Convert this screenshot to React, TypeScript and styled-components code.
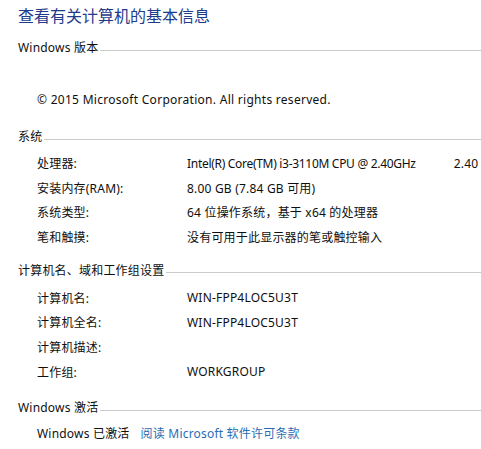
import React from 'react';
import styled, { createGlobalStyle } from 'styled-components';

const Global = createGlobalStyle`
  html, body { margin: 0; padding: 0; background: #fff; }
  body { font-family: "Noto Sans", "Noto Sans CJK SC", sans-serif; overflow: hidden; }
`;

const Page = styled.div`
  width: 481px;
  height: 449px;
  overflow: hidden;
  padding-left: 18px;
  box-sizing: border-box;
  color: #0f0f0f;
  font-size: 12px;
  letter-spacing: 0.2px;
`;

const Title = styled.h1`
  margin: 6px 0 0;
  font-size: 16px;
  line-height: 20px;
  font-weight: normal;
  letter-spacing: 0;
  color: #1e3b8c;
  white-space: nowrap;
`;

const SectionHeader = styled.div<{ $top: number }>`
  display: flex;
  align-items: center;
  height: 16px;
  line-height: 16px;
  margin-top: ${(p) => p.$top}px;
  white-space: nowrap;
`;

const Rule = styled.div`
  flex: 1;
  height: 1px;
  background: #cbcbcb;
  margin: 4px 0 0 2px;
`;

const Rows = styled.div<{ $row: number; $top: number }>`
  display: grid;
  grid-template-columns: 150px 294px;
  grid-auto-rows: ${(p) => p.$row}px;
  align-items: center;
  padding-left: 19px;
  margin-top: ${(p) => p.$top}px;
  white-space: nowrap;
`;

const Cell = styled.div`
  display: flex;
  gap: 38px;
  white-space: nowrap;
  min-width: 0;
`;

const Tight = styled.span`
  letter-spacing: -0.3px;
`;

const Line = styled.div<{ $top: number; $spacing?: number }>`
  height: 24px;
  line-height: 24px;
  padding-left: 19px;
  margin-top: ${(p) => p.$top}px;
  letter-spacing: ${(p) => p.$spacing ?? 0.2}px;
  white-space: nowrap;
  display: flex;
  gap: 11px;
`;

const Link = styled.a`
  color: #2a6db5;
  text-decoration: none;
`;

type Item = [string, React.ReactNode];

const system: Item[] = [
  [
    '处理器:',
    <>
      <Tight>Intel(R) Core(TM) i3-3110M CPU @ 2.40GHz</Tight>
      <span>2.40</span>
    </>,
  ],
  ['安装内存(RAM):', '8.00 GB (7.84 GB 可用)'],
  ['系统类型:', '64 位操作系统，基于 x64 的处理器'],
  ['笔和触摸:', '没有可用于此显示器的笔或触控输入'],
];

const computer: Item[] = [
  ['计算机名:', 'WIN-FPP4LOC5U3T'],
  ['计算机全名:', 'WIN-FPP4LOC5U3T'],
  ['计算机描述:', ''],
  ['工作组:', 'WORKGROUP'],
];

export default function App() {
  return (
    <>
      <Global />
      <Page>
        <Title>查看有关计算机的基本信息</Title>

        <SectionHeader $top={14}>
          Windows 版本<Rule />
        </SectionHeader>
        <Line $top={32} $spacing={0.28}>
          © 2015 Microsoft Corporation. All rights reserved.
        </Line>

        <SectionHeader $top={17}>
          系统<Rule />
        </SectionHeader>
        <Rows $row={24.5} $top={6}>
          {system.map(([k, v]) => (
            <React.Fragment key={k}>
              <Cell>{k}</Cell>
              <Cell>{v}</Cell>
            </React.Fragment>
          ))}
        </Rows>

        <SectionHeader $top={13.5}>
          计算机名、域和工作组设置<Rule />
        </SectionHeader>
        <Rows $row={24.67} $top={7}>
          {computer.map(([k, v]) => (
            <React.Fragment key={k}>
              <Cell>{k}</Cell>
              <Cell>{v}</Cell>
            </React.Fragment>
          ))}
        </Rows>

        <SectionHeader $top={16.3}>
          Windows 激活<Rule />
        </SectionHeader>
        <Line $top={6}>
          <span>Windows 已激活</span>
          <Link href="#">阅读 Microsoft 软件许可条款</Link>
        </Line>
      </Page>
    </>
  );
}
